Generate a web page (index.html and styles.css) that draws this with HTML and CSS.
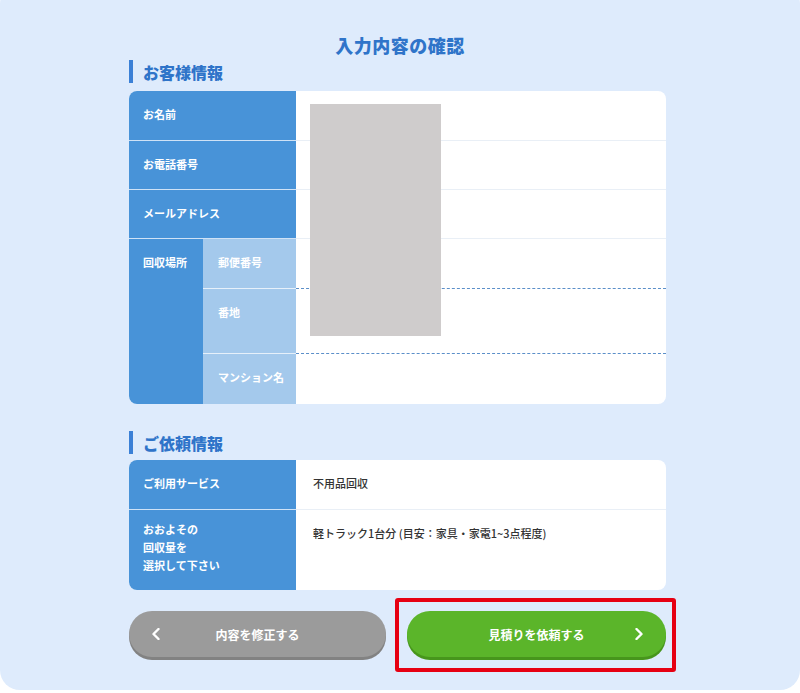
FILE: index.html
```html
<!DOCTYPE html>
<html lang="ja">
<head>
<meta charset="utf-8">
<title>入力内容の確認</title>
<link rel="stylesheet" href="styles.css">
</head>
<body>
<div class="panel">
  <h1 class="title">入力内容の確認</h1>
  <div class="content">
    <h2 class="sec-head">お客様情報</h2>
    <div class="table">
      <div class="row">
        <div class="label">お名前</div>
        <div class="value"></div>
      </div>
      <div class="row">
        <div class="label">お電話番号</div>
        <div class="value"></div>
      </div>
      <div class="row">
        <div class="label">メールアドレス</div>
        <div class="value"></div>
      </div>
      <div class="group">
        <div class="group-label">回収場所</div>
        <div class="sub-label sub-a">郵便番号</div>
        <div class="sub-value sub-a dashed"></div>
        <div class="sub-label sub-b">番地</div>
        <div class="sub-value sub-b dashed"></div>
        <div class="sub-label sub-c last">マンション名</div>
        <div class="sub-value sub-c"></div>
      </div>
      <div class="redact"></div>
    </div>

    <h2 class="sec-head sec-head2">ご依頼情報</h2>
    <div class="table">
      <div class="row">
        <div class="label">ご利用サービス</div>
        <div class="value text">不用品回収</div>
      </div>
      <div class="row row-tall">
        <div class="label multi">おおよその<br>回収量を<br>選択して下さい</div>
        <div class="value text">軽トラック1台分 (目安：家具・家電1~3点程度)</div>
      </div>
    </div>

    <div class="buttons">
      <a class="btn btn-back">
        <svg class="chev chev-left" viewBox="0 0 8 12" width="8" height="12"><polyline points="6.5,1 1.5,6 6.5,11" fill="none" stroke="#fff" stroke-width="2.4" stroke-linecap="round" stroke-linejoin="round"/></svg>
        <span>内容を修正する</span>
      </a>
      <a class="btn btn-next">
        <span>見積りを依頼する</span>
        <svg class="chev chev-right" viewBox="0 0 8 12" width="8" height="12"><polyline points="1.5,1 6.5,6 1.5,11" fill="none" stroke="#fff" stroke-width="2.4" stroke-linecap="round" stroke-linejoin="round"/></svg>
      </a>
    </div>
  </div>
</div>
</body>
</html>
```

FILE: styles.css
```css
* { box-sizing: border-box; }
html, body { margin: 0; padding: 0; background: #ffffff; }
body {
  font-family: "Noto Sans CJK JP", "Noto Sans", sans-serif;
  color: #333;
}
.panel {
  margin-top: -16px;
  background: #deebfc;
  border-radius: 20px;
  padding: 49px 0 33px;
}
.title {
  margin: 0;
  text-align: center;
  font-size: 18px;
  line-height: 24px;
  font-weight: 900;
  letter-spacing: 0.5px;
  color: #2f74c9;
}
.content {
  margin-left: 129px;
  width: 537px;
}
.sec-head {
  margin: 3px 0 8px;
  font-size: 16px;
  line-height: 24px;
  font-weight: 900;
  color: #2f74c9;
  border-left: 4px solid #3b80d6;
  padding-left: 10px;
  height: 23px;
  display: flex;
  align-items: center;
}
.sec-head2 { margin: 27px 0 6px; }
.table {
  position: relative;
  background: #fff;
  border-radius: 8px;
  overflow: hidden;
}
.row {
  display: grid;
  grid-template-columns: 167px 1fr;
  height: 49px;
}
.row + .row .label { border-top: 1px solid #cfe2f6; }
.row + .row .value { border-top: 1px solid #e9eff6; }
.row-tall { height: 81px; }
.label {
  background: #4893d8;
  color: #fff;
  font-size: 11px;
  font-weight: 700;
  line-height: 14px;
  padding: 16px 14px 0;
}
.label.multi {
  line-height: 18px;
  padding-top: 10px;
}
.value { padding: 16px 17px 0; }
.value.text {
  font-size: 11px;
  line-height: 14px;
  font-weight: 500;
  color: #333;
}
.row-tall .value.text { padding-top: 16px; }
.group {
  position: relative;
  display: grid;
  grid-template-columns: 74px 93px 1fr;
  grid-template-rows: 50px 65px 50px;
  border-top: 1px solid #cfe2f6;
}
.group::before {
  content: "";
  position: absolute;
  left: 167px;
  right: 0;
  top: -1px;
  border-top: 1px solid #e9eff6;
}
.group-label {
  grid-row: 1 / 4;
  grid-column: 1;
  background: #4893d8;
  color: #fff;
  font-size: 11px;
  font-weight: 700;
  line-height: 14px;
  padding: 16px 14px 0;
}
.sub-label {
  grid-column: 2;
  background: #a4c9ec;
  color: #fff;
  font-size: 11px;
  font-weight: 700;
  line-height: 14px;
  padding: 16px 2px 0 15px;
  white-space: nowrap;
  border-bottom: 1px solid #e6f0fa;
}
.sub-label.last { border-bottom: none; }
.sub-value { grid-column: 3; }
.sub-a { grid-row: 1; }
.sub-b { grid-row: 2; }
.sub-c { grid-row: 3; }
.dashed { border-bottom: 1px dashed #5b8fc9; }
.redact {
  position: absolute;
  left: 181px;
  top: 13px;
  width: 131px;
  height: 232px;
  background: #cfcccc;
}
.buttons {
  display: flex;
  gap: 21px;
  margin-top: 21px;
}
.btn {
  position: relative;
  height: 46px;
  border-radius: 23px;
  display: flex;
  align-items: center;
  justify-content: center;
  color: #fff;
  font-size: 12px;
  font-weight: 700;
  text-decoration: none;
}
.btn-back {
  width: 257px;
  background: #9b9b9b;
  box-shadow: 0 3px 0 #828282;
}
.btn-next {
  width: 259px;
  background: #5bb52a;
  box-shadow: 0 3px 0 #47961c;
}
.btn-next::after {
  content: "";
  position: absolute;
  left: -12px;
  right: -10px;
  top: -13px;
  bottom: -15px;
  border: 4px solid #e60012;
  border-radius: 3px;
}
.chev { position: absolute; top: 17px; }
.chev-left { left: 23px; }
.chev-right { right: 23px; }
```
